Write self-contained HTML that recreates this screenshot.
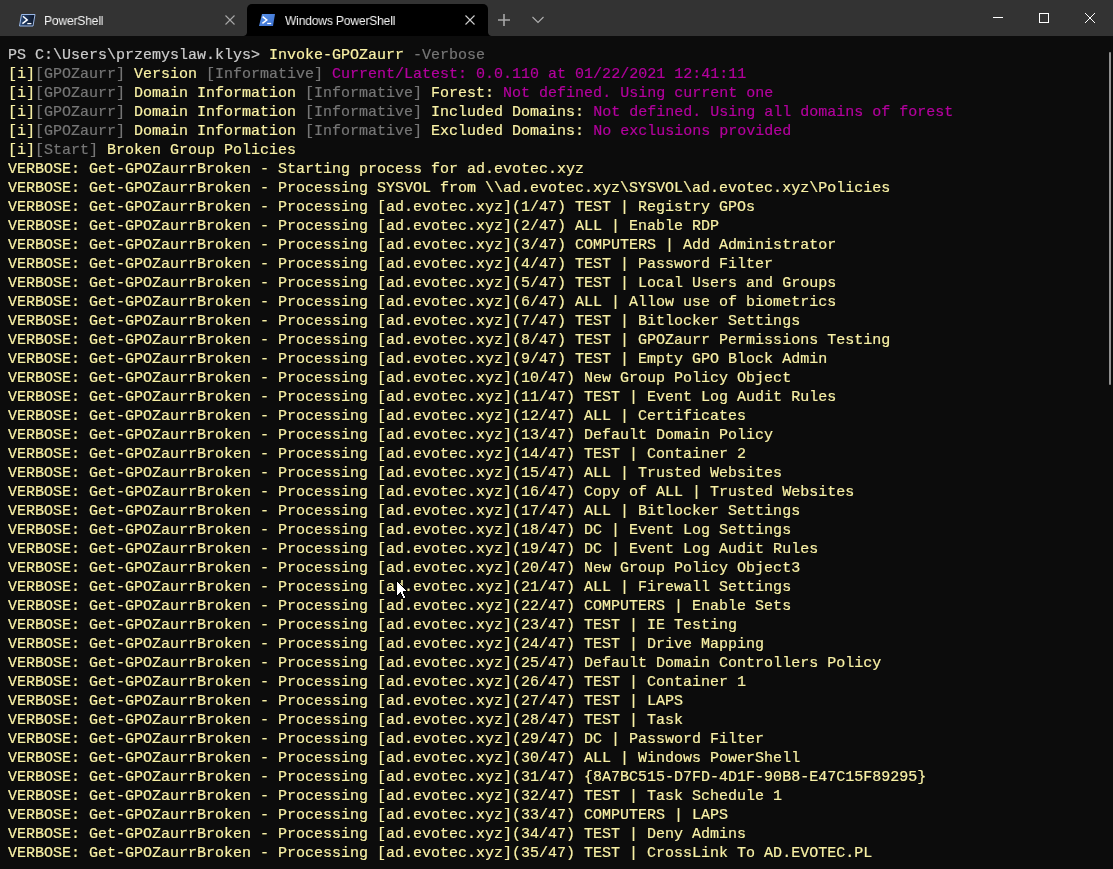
<!DOCTYPE html>
<html><head><meta charset="utf-8">
<style>
html,body{margin:0;padding:0;width:1113px;height:869px;overflow:hidden;background:#0c0c0c;}
#bar{position:absolute;left:0;top:0;width:1113px;height:36px;background:#333333;}
#tab2{position:absolute;left:247px;top:4px;width:241px;height:32px;background:#000;border-radius:5px 5px 0 0;}
.tt{position:absolute;will-change:transform;font-family:"Liberation Sans",sans-serif;font-size:13px;letter-spacing:-0.2px;transform:scaleX(0.93);transform-origin:0 0;color:#f4f4f4;top:14px;line-height:14px;white-space:nowrap;}
#term{position:absolute;will-change:transform;left:8px;top:46px;-webkit-text-stroke:0.2px;font-family:"Liberation Mono",monospace;font-size:15px;line-height:19px;white-space:pre;}
.l{height:19px;}
#sb{position:absolute;left:1109px;top:52px;width:2px;height:333px;background:#8f8f8f;border-radius:1px;}
svg{position:absolute;overflow:visible}
</style></head><body>
<div id="bar"></div>
<div id="tab2"></div><div style="position:absolute;left:243px;top:32px;width:4px;height:4px;background:radial-gradient(circle at 0 0,#333 3.5px,#000 4.5px)"></div><div style="position:absolute;left:488px;top:32px;width:4px;height:4px;background:radial-gradient(circle at 100% 0,#333 3.5px,#000 4.5px)"></div>
<!-- inactive tab icon -->
<svg style="left:19px;top:14px" width="17" height="13" viewBox="0 0 17 13">
<defs><linearGradient id="gi" x1="0" y1="0" x2="1" y2="0"><stop offset="0" stop-color="#2a4a7a"/><stop offset="1" stop-color="#0b1426"/></linearGradient></defs>
<path d="M2.5 0.5 H16 L14 12 H0.5 Z" fill="url(#gi)" stroke="#9ab8e6" stroke-width="1"/>
<path d="M4 2.2 L8.2 5.9 L3.4 9.6" fill="none" stroke="#fff" stroke-width="1.5"/>
<path d="M8.3 9.6 H12.4" stroke="#fff" stroke-width="1.3"/>
</svg>
<div class="tt" style="left:44px">PowerShell</div>
<svg style="left:225px;top:15px" width="10" height="10" viewBox="0 0 10 10"><path d="M0.5 0.5 L9.5 9.5 M9.5 0.5 L0.5 9.5" stroke="#a8a8a8" stroke-width="1.1"/></svg>
<!-- active tab icon -->
<svg style="left:259px;top:14px" width="16" height="12" viewBox="0 0 16 12">
<defs><linearGradient id="ga" x1="0" y1="0" x2="1" y2="1"><stop offset="0" stop-color="#5a93ea"/><stop offset="1" stop-color="#3a6fd0"/></linearGradient></defs>
<path d="M3 0 H16 L14 12 H0 Z" fill="url(#ga)"/>
<path d="M3.6 2.6 L7.8 6 L3.4 9.4" fill="none" stroke="#fff" stroke-width="1.5"/>
<path d="M8.2 9.5 H12.2" stroke="#fff" stroke-width="1.3"/>
</svg>
<div class="tt" style="left:285px">Windows PowerShell</div>
<svg style="left:465px;top:15px" width="10" height="10" viewBox="0 0 10 10"><path d="M0.5 0.5 L9.5 9.5 M9.5 0.5 L0.5 9.5" stroke="#cfcfcf" stroke-width="1.1"/></svg>
<svg style="left:498px;top:14px" width="12" height="12" viewBox="0 0 12 12"><path d="M6 0 V12 M0 6 H12" stroke="#a8a8a8" stroke-width="1.6"/></svg>
<svg style="left:532px;top:17px" width="12" height="7" viewBox="0 0 12 7"><path d="M0.5 0 L6 5.5 L11.5 0" fill="none" stroke="#b0b0b0" stroke-width="1.1"/></svg>
<!-- caption buttons -->
<svg style="left:993px;top:17px" width="10" height="1" viewBox="0 0 10 1"><path d="M0 0.5 H10" stroke="#fff" stroke-width="1"/></svg>
<svg style="left:1039px;top:13px" width="10" height="10" viewBox="0 0 10 10"><rect x="0.5" y="0.5" width="9" height="9" fill="none" stroke="#fff" stroke-width="1"/></svg>
<svg style="left:1085px;top:13px" width="10" height="10" viewBox="0 0 10 10"><path d="M0 0 L10 10 M10 0 L0 10" stroke="#fff" stroke-width="1"/></svg>
<div id="term"><div class="l"><span style="color:#cccccc">PS C:\Users\przemyslaw.klys&gt; </span><span style="color:#f9f1a5">Invoke-GPOZaurr</span><span style="color:#767676"> -Verbose</span></div><div class="l"><span style="color:#f9f1a5">[i]</span><span style="color:#767676">[GPOZaurr]</span><span style="color:#f9f1a5"> Version </span><span style="color:#767676">[Informative]</span><span style="color:#b4009e"> Current/Latest: 0.0.110 at 01/22/2021 12:41:11</span></div><div class="l"><span style="color:#f9f1a5">[i]</span><span style="color:#767676">[GPOZaurr]</span><span style="color:#f9f1a5"> Domain Information </span><span style="color:#767676">[Informative]</span><span style="color:#f9f1a5"> Forest: </span><span style="color:#b4009e">Not defined. Using current one</span></div><div class="l"><span style="color:#f9f1a5">[i]</span><span style="color:#767676">[GPOZaurr]</span><span style="color:#f9f1a5"> Domain Information </span><span style="color:#767676">[Informative]</span><span style="color:#f9f1a5"> Included Domains: </span><span style="color:#b4009e">Not defined. Using all domains of forest</span></div><div class="l"><span style="color:#f9f1a5">[i]</span><span style="color:#767676">[GPOZaurr]</span><span style="color:#f9f1a5"> Domain Information </span><span style="color:#767676">[Informative]</span><span style="color:#f9f1a5"> Excluded Domains: </span><span style="color:#b4009e">No exclusions provided</span></div><div class="l"><span style="color:#f9f1a5">[i]</span><span style="color:#767676">[Start]</span><span style="color:#f9f1a5"> Broken Group Policies</span></div><div class="l"><span style="color:#f9f1a5">VERBOSE: Get-GPOZaurrBroken - Starting process for ad.evotec.xyz</span></div><div class="l"><span style="color:#f9f1a5">VERBOSE: Get-GPOZaurrBroken - Processing SYSVOL from \\ad.evotec.xyz\SYSVOL\ad.evotec.xyz\Policies</span></div><div class="l"><span style="color:#f9f1a5">VERBOSE: Get-GPOZaurrBroken - Processing [ad.evotec.xyz](1/47) TEST | Registry GPOs</span></div><div class="l"><span style="color:#f9f1a5">VERBOSE: Get-GPOZaurrBroken - Processing [ad.evotec.xyz](2/47) ALL | Enable RDP</span></div><div class="l"><span style="color:#f9f1a5">VERBOSE: Get-GPOZaurrBroken - Processing [ad.evotec.xyz](3/47) COMPUTERS | Add Administrator</span></div><div class="l"><span style="color:#f9f1a5">VERBOSE: Get-GPOZaurrBroken - Processing [ad.evotec.xyz](4/47) TEST | Password Filter</span></div><div class="l"><span style="color:#f9f1a5">VERBOSE: Get-GPOZaurrBroken - Processing [ad.evotec.xyz](5/47) TEST | Local Users and Groups</span></div><div class="l"><span style="color:#f9f1a5">VERBOSE: Get-GPOZaurrBroken - Processing [ad.evotec.xyz](6/47) ALL | Allow use of biometrics</span></div><div class="l"><span style="color:#f9f1a5">VERBOSE: Get-GPOZaurrBroken - Processing [ad.evotec.xyz](7/47) TEST | Bitlocker Settings</span></div><div class="l"><span style="color:#f9f1a5">VERBOSE: Get-GPOZaurrBroken - Processing [ad.evotec.xyz](8/47) TEST | GPOZaurr Permissions Testing</span></div><div class="l"><span style="color:#f9f1a5">VERBOSE: Get-GPOZaurrBroken - Processing [ad.evotec.xyz](9/47) TEST | Empty GPO Block Admin</span></div><div class="l"><span style="color:#f9f1a5">VERBOSE: Get-GPOZaurrBroken - Processing [ad.evotec.xyz](10/47) New Group Policy Object</span></div><div class="l"><span style="color:#f9f1a5">VERBOSE: Get-GPOZaurrBroken - Processing [ad.evotec.xyz](11/47) TEST | Event Log Audit Rules</span></div><div class="l"><span style="color:#f9f1a5">VERBOSE: Get-GPOZaurrBroken - Processing [ad.evotec.xyz](12/47) ALL | Certificates</span></div><div class="l"><span style="color:#f9f1a5">VERBOSE: Get-GPOZaurrBroken - Processing [ad.evotec.xyz](13/47) Default Domain Policy</span></div><div class="l"><span style="color:#f9f1a5">VERBOSE: Get-GPOZaurrBroken - Processing [ad.evotec.xyz](14/47) TEST | Container 2</span></div><div class="l"><span style="color:#f9f1a5">VERBOSE: Get-GPOZaurrBroken - Processing [ad.evotec.xyz](15/47) ALL | Trusted Websites</span></div><div class="l"><span style="color:#f9f1a5">VERBOSE: Get-GPOZaurrBroken - Processing [ad.evotec.xyz](16/47) Copy of ALL | Trusted Websites</span></div><div class="l"><span style="color:#f9f1a5">VERBOSE: Get-GPOZaurrBroken - Processing [ad.evotec.xyz](17/47) ALL | Bitlocker Settings</span></div><div class="l"><span style="color:#f9f1a5">VERBOSE: Get-GPOZaurrBroken - Processing [ad.evotec.xyz](18/47) DC | Event Log Settings</span></div><div class="l"><span style="color:#f9f1a5">VERBOSE: Get-GPOZaurrBroken - Processing [ad.evotec.xyz](19/47) DC | Event Log Audit Rules</span></div><div class="l"><span style="color:#f9f1a5">VERBOSE: Get-GPOZaurrBroken - Processing [ad.evotec.xyz](20/47) New Group Policy Object3</span></div><div class="l"><span style="color:#f9f1a5">VERBOSE: Get-GPOZaurrBroken - Processing [ad.evotec.xyz](21/47) ALL | Firewall Settings</span></div><div class="l"><span style="color:#f9f1a5">VERBOSE: Get-GPOZaurrBroken - Processing [ad.evotec.xyz](22/47) COMPUTERS | Enable Sets</span></div><div class="l"><span style="color:#f9f1a5">VERBOSE: Get-GPOZaurrBroken - Processing [ad.evotec.xyz](23/47) TEST | IE Testing</span></div><div class="l"><span style="color:#f9f1a5">VERBOSE: Get-GPOZaurrBroken - Processing [ad.evotec.xyz](24/47) TEST | Drive Mapping</span></div><div class="l"><span style="color:#f9f1a5">VERBOSE: Get-GPOZaurrBroken - Processing [ad.evotec.xyz](25/47) Default Domain Controllers Policy</span></div><div class="l"><span style="color:#f9f1a5">VERBOSE: Get-GPOZaurrBroken - Processing [ad.evotec.xyz](26/47) TEST | Container 1</span></div><div class="l"><span style="color:#f9f1a5">VERBOSE: Get-GPOZaurrBroken - Processing [ad.evotec.xyz](27/47) TEST | LAPS</span></div><div class="l"><span style="color:#f9f1a5">VERBOSE: Get-GPOZaurrBroken - Processing [ad.evotec.xyz](28/47) TEST | Task</span></div><div class="l"><span style="color:#f9f1a5">VERBOSE: Get-GPOZaurrBroken - Processing [ad.evotec.xyz](29/47) DC | Password Filter</span></div><div class="l"><span style="color:#f9f1a5">VERBOSE: Get-GPOZaurrBroken - Processing [ad.evotec.xyz](30/47) ALL | Windows PowerShell</span></div><div class="l"><span style="color:#f9f1a5">VERBOSE: Get-GPOZaurrBroken - Processing [ad.evotec.xyz](31/47) {8A7BC515-D7FD-4D1F-90B8-E47C15F89295}</span></div><div class="l"><span style="color:#f9f1a5">VERBOSE: Get-GPOZaurrBroken - Processing [ad.evotec.xyz](32/47) TEST | Task Schedule 1</span></div><div class="l"><span style="color:#f9f1a5">VERBOSE: Get-GPOZaurrBroken - Processing [ad.evotec.xyz](33/47) COMPUTERS | LAPS</span></div><div class="l"><span style="color:#f9f1a5">VERBOSE: Get-GPOZaurrBroken - Processing [ad.evotec.xyz](34/47) TEST | Deny Admins</span></div><div class="l"><span style="color:#f9f1a5">VERBOSE: Get-GPOZaurrBroken - Processing [ad.evotec.xyz](35/47) TEST | CrossLink To AD.EVOTEC.PL</span></div></div>
<div id="sb"></div>
<!-- mouse cursor -->
<svg style="left:396px;top:580px" width="12" height="19" viewBox="0 0 12 19" shape-rendering="crispEdges"><rect x="0" y="0" width="1" height="1" fill="#000"/><rect x="0" y="1" width="2" height="1" fill="#000"/><rect x="0" y="2" width="1" height="1" fill="#000"/><rect x="1" y="2" width="1" height="1" fill="#fff"/><rect x="2" y="2" width="1" height="1" fill="#000"/><rect x="0" y="3" width="1" height="1" fill="#000"/><rect x="1" y="3" width="2" height="1" fill="#fff"/><rect x="3" y="3" width="1" height="1" fill="#000"/><rect x="0" y="4" width="1" height="1" fill="#000"/><rect x="1" y="4" width="3" height="1" fill="#fff"/><rect x="4" y="4" width="1" height="1" fill="#000"/><rect x="0" y="5" width="1" height="1" fill="#000"/><rect x="1" y="5" width="4" height="1" fill="#fff"/><rect x="5" y="5" width="1" height="1" fill="#000"/><rect x="0" y="6" width="1" height="1" fill="#000"/><rect x="1" y="6" width="5" height="1" fill="#fff"/><rect x="6" y="6" width="1" height="1" fill="#000"/><rect x="0" y="7" width="1" height="1" fill="#000"/><rect x="1" y="7" width="6" height="1" fill="#fff"/><rect x="7" y="7" width="1" height="1" fill="#000"/><rect x="0" y="8" width="1" height="1" fill="#000"/><rect x="1" y="8" width="7" height="1" fill="#fff"/><rect x="8" y="8" width="1" height="1" fill="#000"/><rect x="0" y="9" width="1" height="1" fill="#000"/><rect x="1" y="9" width="8" height="1" fill="#fff"/><rect x="9" y="9" width="1" height="1" fill="#000"/><rect x="0" y="10" width="1" height="1" fill="#000"/><rect x="1" y="10" width="9" height="1" fill="#fff"/><rect x="10" y="10" width="1" height="1" fill="#000"/><rect x="0" y="11" width="1" height="1" fill="#000"/><rect x="1" y="11" width="6" height="1" fill="#fff"/><rect x="7" y="11" width="5" height="1" fill="#000"/><rect x="0" y="12" width="1" height="1" fill="#000"/><rect x="1" y="12" width="3" height="1" fill="#fff"/><rect x="4" y="12" width="1" height="1" fill="#000"/><rect x="5" y="12" width="2" height="1" fill="#fff"/><rect x="7" y="12" width="1" height="1" fill="#000"/><rect x="0" y="13" width="1" height="1" fill="#000"/><rect x="1" y="13" width="2" height="1" fill="#fff"/><rect x="3" y="13" width="2" height="1" fill="#000"/><rect x="5" y="13" width="2" height="1" fill="#fff"/><rect x="7" y="13" width="1" height="1" fill="#000"/><rect x="0" y="14" width="1" height="1" fill="#000"/><rect x="1" y="14" width="1" height="1" fill="#fff"/><rect x="2" y="14" width="1" height="1" fill="#000"/><rect x="5" y="14" width="1" height="1" fill="#000"/><rect x="6" y="14" width="2" height="1" fill="#fff"/><rect x="8" y="14" width="1" height="1" fill="#000"/><rect x="0" y="15" width="2" height="1" fill="#000"/><rect x="5" y="15" width="1" height="1" fill="#000"/><rect x="6" y="15" width="2" height="1" fill="#fff"/><rect x="8" y="15" width="1" height="1" fill="#000"/><rect x="0" y="16" width="1" height="1" fill="#000"/><rect x="6" y="16" width="1" height="1" fill="#000"/><rect x="7" y="16" width="2" height="1" fill="#fff"/><rect x="9" y="16" width="1" height="1" fill="#000"/><rect x="6" y="17" width="1" height="1" fill="#000"/><rect x="7" y="17" width="2" height="1" fill="#fff"/><rect x="9" y="17" width="1" height="1" fill="#000"/><rect x="7" y="18" width="2" height="1" fill="#000"/></svg>
</body></html>
